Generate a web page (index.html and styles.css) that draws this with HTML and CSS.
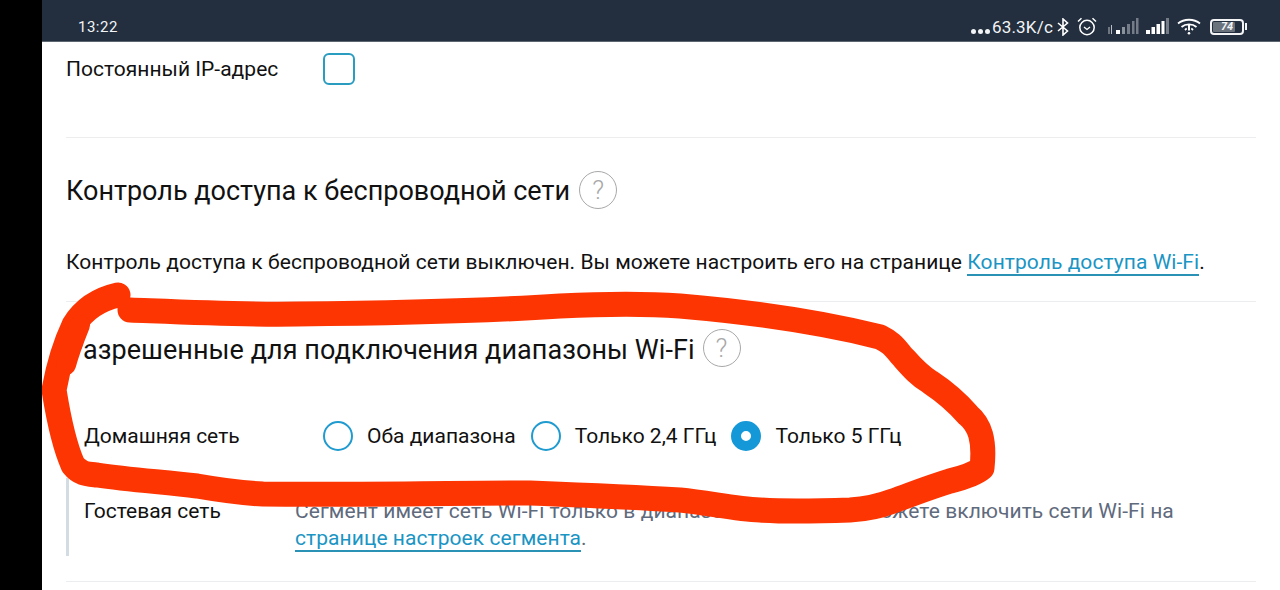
FILE: index.html
```html
<!DOCTYPE html>
<html lang="ru">
<head>
  <meta charset="UTF-8">
  <meta name="viewport" content="width=device-width, initial-scale=1.0">
  <title>Настройки Wi-Fi</title>
  <link rel="stylesheet" href="styles.css">
</head>
<body>
  <div class="screen">
    <!-- статус-бар телефона -->
    <div class="statusbar">
      <span class="clock">13:22</span>
      <div class="status-right">
        <span class="dots"><i></i><i></i><i></i></span>
        <span class="speed">63.3K/c</span>
        <svg class="ico-bt" width="12" height="18" viewBox="0 0 12 18" fill="none" stroke="#fff" stroke-width="1.6">
          <path d="M1 5l9.5 8L6 17V1l4.5 4L1 13"/>
        </svg>
        <svg class="ico-alarm" width="20" height="19" viewBox="0 0 20 19" fill="none" stroke="#fff" stroke-width="1.5">
          <circle cx="10" cy="10.5" r="7.2"/>
          <path d="M7 10l3 2.5L13 10" stroke-width="1.3"/>
          <path d="M1 4.5L4.5 1.2M19 4.5L15.5 1.2"/>
        </svg>
        <svg class="ico-sig1" width="32" height="17" viewBox="0 0 32 17">
          <path d="M2 9v7M4.500 7v9" stroke="#b9bec4" stroke-width="1"/>
          <rect x="9" y="12" width="4" height="4" fill="#fff"/>
          <rect x="15" y="9" width="3" height="7" fill="#8a929b"/>
          <rect x="20" y="6" width="3" height="10" fill="#747d87"/>
          <rect x="25" y="3" width="2.500" height="13" fill="#747d87"/>
          <rect x="29" y="0" width="2.500" height="16" fill="#747d87"/>
        </svg>
        <svg class="ico-sig2" width="23" height="17" viewBox="0 0 23 17">
          <rect x="0" y="12" width="4" height="4" fill="#fff"/>
          <rect x="5.500" y="9" width="3.500" height="7" fill="#fff"/>
          <rect x="10.500" y="6" width="3.500" height="10" fill="#fff"/>
          <rect x="15.500" y="3" width="3" height="13" fill="#fff"/>
          <rect x="20" y="0" width="3" height="16" fill="#747d87"/>
        </svg>
        <svg class="ico-wifi" width="24" height="17" viewBox="0 0 24 17" fill="none" stroke="#fff" stroke-width="1.800">
          <path d="M1 5.500C7 .5 17 .5 23 5.500"/>
          <path d="M4.500 9C8.500 5.500 15.500 5.500 19.500 9"/>
          <path d="M8 12c1-1 1.500-1.200 1.800-1.300M16 12c-1-1-1.500-1.200-1.800-1.300"/>
          <path d="M12 6.500v6" stroke-width="2"/>
          <circle cx="12" cy="15.300" r="1.300" fill="#fff" stroke="none"/>
        </svg>
        <div class="battery">
          <div class="battery-body"><div class="battery-fill"></div><span>74</span></div>
          <div class="battery-tip"></div>
        </div>
      </div>
    </div>

    <div class="content">
      <section class="sec sec-ip">
        <div class="ip-row">
          <span class="ip-label">Постоянный IP-адрес</span>
          <span class="checkbox"></span>
        </div>
      </section>

      <section class="sec sec-access">
        <div class="title-row">
          <h2>Контроль доступа к беспроводной сети</h2>
          <span class="help">?</span>
        </div>
        <p class="note">Контроль доступа к беспроводной сети выключен. Вы можете настроить его на странице <a class="link" href="#">Контроль доступа Wi-Fi</a>.</p>
      </section>

      <section class="sec sec-bands">
        <div class="title-row">
          <h2>Разрешенные для подключения диапазоны Wi-Fi</h2>
          <span class="help">?</span>
        </div>
        <div class="home-row">
          <span class="net-label">Домашняя сеть</span>
          <div class="radios">
            <label class="radio"><i class="dot"></i>Оба диапазона</label>
            <label class="radio"><i class="dot"></i>Только 2,4 ГГц</label>
            <label class="radio"><i class="dot on"></i>Только 5 ГГц</label>
          </div>
        </div>
        <div class="guest-row">
          <span class="net-label guest-label">Гостевая сеть</span>
          <div class="guest-text">Сегмент имеет сеть Wi-Fi только в диапазоне 2,4 ГГц. Вы можете включить сети Wi-Fi на <a class="link" href="#">странице настроек сегмента</a>.</div>
        </div>
      </section>
    </div>

    <!-- красная пометка от руки поверх страницы -->
    <svg class="scribble" width="1280" height="590" viewBox="0 0 1280 590" fill="none" stroke="#fd3503" stroke-linecap="round" stroke-linejoin="round">
      <path stroke-width="25" d="M118 295C96 300 82 312 74 325C66 342 58 368 54 390C58 415 64 445 73 465C80 474 88 474 97 475C130 480 165 482 197 486C220 490 240 493 263 494C350 495 440 493 530 493C580 495 630 497 680 500C710 503 735 509 760 510C790 512 820 511 850 510C868 509 880 506 893 501C910 495 930 487 950 481C962 478 975 474 982 468C985 440 980 425 968 415C955 400 945 392 930 382C918 375 910 365 901 355C893 345 890 342 880 337C820 322 750 312 680 306C640 303 600 304 560 306C500 310 400 313 297 314C240 315 180 312 130 310"/>
      <path stroke-width="20" d="M80 325C74 340 70 350 66 365"/>
    </svg>
  </div>
</body>
</html>
```

FILE: styles.css
```css
* {
  box-sizing: border-box;
}

html, body {
  margin: 0;
  height: 100%;
  background: #000;
}

body {
  font-family: Roboto, "Liberation Sans", sans-serif;
  color: #111;
  overflow: hidden;
}

.screen {
  position: relative;
  margin-left: 42px;
  height: 590px;
  background: #fff;
  overflow: hidden;
}

.scribble {
  position: absolute;
  left: -42px;
  top: 0;
  pointer-events: none;
}

/* статус-бар */
.statusbar {
  height: 42px;
  background: #232f3e;
  border-bottom: 1px solid #5c6670;
  color: #f2f4f6;
  display: flex;
  align-items: center;
  padding: 12px 33px 0 36px;
  justify-content: space-between;
}

.clock {
  font-size: 15px;
  letter-spacing: 0.5px;
}

.status-right {
  display: flex;
  align-items: center;
}

.dots {
  display: flex;
  gap: 2px;
  margin-top: 9px;
  margin-right: 2px;
}

.dots i {
  width: 5px;
  height: 5px;
  border-radius: 50%;
  background: #f2f4f6;
}

.speed {
  font-size: 17px;
  letter-spacing: 0.2px;
}

.ico-bt { margin-left: 4px; }
.ico-alarm { margin-left: 8px; }
.ico-sig1 { margin-left: 10px; }
.ico-sig2 { margin-left: 7px; }
.ico-wifi { margin-left: 8px; }

.battery {
  display: flex;
  align-items: center;
  margin-left: 9px;
}

.battery-body {
  position: relative;
  width: 34px;
  height: 16px;
  border: 2px solid #f2f4f6;
  border-radius: 4px;
  display: flex;
  align-items: center;
  justify-content: center;
  font-size: 11px;
  font-weight: 700;
  font-style: italic;
}

.battery-body span {
  position: relative;
}

.battery-fill {
  position: absolute;
  left: 1px;
  top: 1px;
  bottom: 1px;
  width: 72%;
  background: #6a727c;
  border-radius: 1px;
}

.battery-tip {
  width: 2px;
  height: 7px;
  margin-left: 1px;
  background: #f2f4f6;
}

/* содержимое */
.content {
  padding: 0 24px;
}

.sec {
  border-bottom: 1px solid #ebedef;
}

.sec-ip {
  height: 96px;
  padding-top: 10px;
}

.ip-row {
  display: flex;
  align-items: center;
  height: 33px;
}

.ip-label {
  font-size: 21px;
  letter-spacing: 0.03px;
  width: 257px;
}

.checkbox {
  width: 32px;
  height: 32px;
  border: 2px solid #2a9cc0;
  border-radius: 6px;
}

.sec-access {
  height: 164px;
  padding-top: 33px;
}

.title-row {
  display: flex;
  align-items: center;
  gap: 9px;
  height: 38px;
}

h2 {
  margin: 0;
  padding-top: 2px;
  font-size: 27px;
  font-weight: 400;
}

.sec-bands h2 {
  padding-top: 4px;
  letter-spacing: 0.05px;
}

.sec-bands .title-row {
  gap: 8px;
}

.help {
  width: 38px;
  height: 38px;
  border: 1.500px solid #a8a8a8;
  border-radius: 50%;
  color: #a8a8a8;
  font-size: 26px;
  font-weight: 300;
  display: flex;
  align-items: center;
  justify-content: center;
}

.note {
  margin: 41px 0 0;
  font-size: 21px;
  letter-spacing: 0.06px;
  line-height: 24px;
}

.link {
  color: #1b95c4;
  text-decoration: none;
  border-bottom: 2px solid #2a93b5;
}

.sec-bands {
  height: 280px;
  padding-top: 27px;
}

.home-row {
  display: flex;
  align-items: center;
  margin-top: 50px;
  padding-left: 18px;
  height: 38px;
}

.net-label {
  font-size: 21px;
  width: 239px;
  flex: none;
}

.radios {
  display: flex;
  align-items: center;
  gap: 15px;
}

.radio {
  display: flex;
  align-items: center;
  font-size: 21px;
}

.dot {
  width: 30px;
  height: 30px;
  border: 2px solid #1f9bd0;
  border-radius: 50%;
  margin-right: 14px;
}

.dot.on {
  border: 10px solid #1498d8;
}

.guest-row {
  display: flex;
  margin-top: 23px;
  padding: 20px 0 0 15px;
  height: 78px;
  border-left: 3px solid #d3dbe3;
}

.guest-label {
  width: 211px;
  line-height: 27px;
}

.guest-text {
  font-size: 21px;
  letter-spacing: 0.06px;
  line-height: 27px;
  color: #5f6a7d;
}
```
